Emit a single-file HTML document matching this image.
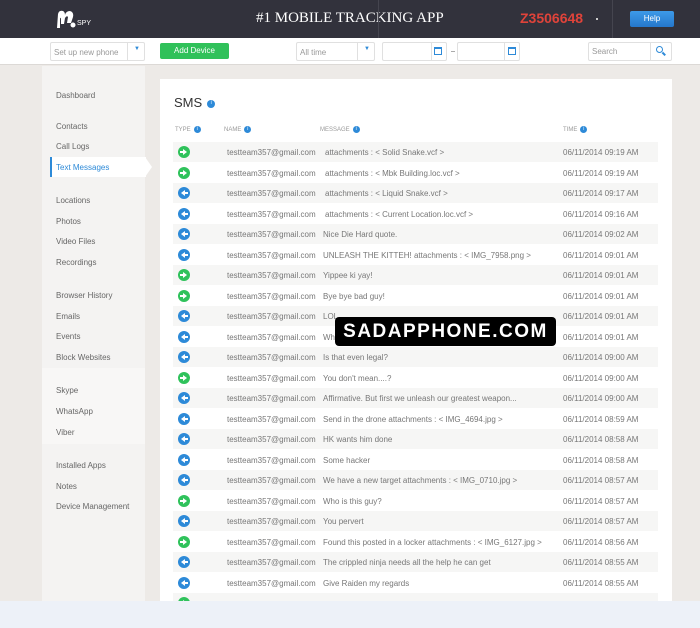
<!DOCTYPE html>
<html style="width:700px;height:628px;overflow:hidden"><head><meta charset="utf-8"><style>
*{margin:0;padding:0;box-sizing:border-box}
body{width:700px;height:628px;overflow:hidden;background:#edeae7;font-family:"Liberation Sans",Arial,sans-serif;position:relative}
.a{position:absolute}
#hdr{left:0;top:0;width:700px;height:38px;background:#32323c}
#tb{left:0;top:38px;width:700px;height:27px;background:#fff;border-bottom:1px solid #dcd9d6}
.inp{position:absolute;background:#fff;border:1px solid #e0e0e0;border-radius:2px;font-size:8px;color:#999;padding:5px 3px}
.side{left:42px;width:103px}
.si{position:absolute;left:56px;font-size:8px;color:#666}
#panel{left:160px;top:79px;width:512px;height:522px;background:#fff}
.row{position:absolute;left:173px;width:485px;height:20px;font-size:8px;color:#777}
.row.s{background:#f6f6f5}
.row span{position:absolute;top:6px;white-space:nowrap}
.ic{position:absolute;left:5px;top:4px;width:12px;height:12px;border-radius:50%}
.g{background:#2fc25b}.b{background:#2d8ad8}
.ic::after{content:"";position:absolute;top:3px;width:0;height:0;border-top:3px solid transparent;border-bottom:3px solid transparent}
.g::after{left:5px;border-left:4px solid #fff}
.b::after{left:3px;border-right:4px solid #fff}
.ic::before{content:"";position:absolute;top:5px;width:4px;height:2px;background:#fff}
.g::before{left:2px}.b::before{left:6px}
.hd{position:absolute;top:126px;font-size:6px;color:#999}
.info{display:inline-block;width:7px;height:7px;border-radius:50%;background:#2d8ad8;vertical-align:middle;margin-left:3px;color:#fff;font-size:5px;text-align:center;line-height:7px}
</style></head><body>
<div id="hdr" class="a">
 <svg class="a" style="left:55px;top:9px" width="22" height="20" viewBox="0 0 22 20"><path d="M2 19 L3 5 Q4 1 8 2 Q10 3 10 6 Q11 2 15 2 Q19 3 18 8 L16 14 L12 14 L13 8 Q12 6 10 9 L9 15 L6 15 L6 9 Q5 8 5 12 L5 19 Z" fill="#fff"/><circle cx="18" cy="16" r="2.5" fill="#fff"/></svg>
 <div class="a" style="left:77px;top:20px;font-size:7px;color:#fff">SPY</div>
 <div class="a" style="left:256px;top:10px;font-family:'Liberation Serif',serif;font-size:15px;color:#fff">#1 MOBILE TRACKING APP</div>
 <div class="a" style="left:378px;top:0;width:1px;height:38px;background:#45454f"></div>
 <div class="a" style="left:520px;top:10px;font-size:14px;color:#e0433a;font-weight:bold">Z3506648</div>
 <div class="a" style="left:596px;top:18px;width:2px;height:2px;background:#ccc"></div>
 <div class="a" style="left:612px;top:0;width:1px;height:38px;background:#45454f"></div>
 <div class="a" style="left:630px;top:11px;width:44px;height:16px;background:linear-gradient(#3d9ae8,#2577cc);border-radius:2px;color:#fff;font-size:8px;text-align:center;line-height:16px">Help</div>
</div>
<div id="tb" class="a">
 <div class="inp" style="left:50px;top:4px;width:95px;height:19px">Set up new phone<span style="position:absolute;left:76px;top:0;width:1px;height:17px;background:#e0e0e0"></span><span style="position:absolute;left:83px;top:3px;color:#2d8ad8;font-size:6px">▼</span></div>
 <div class="a" style="left:160px;top:5px;width:69px;height:16px;background:#30c15a;border-radius:2px;color:#fff;font-size:8px;text-align:center;line-height:16px">Add Device</div>
 <div class="inp" style="left:296px;top:4px;width:79px;height:19px">All time<span style="position:absolute;left:60px;top:0;width:1px;height:17px;background:#e0e0e0"></span><span style="position:absolute;left:67px;top:3px;color:#2d8ad8;font-size:6px">▼</span></div>
 <div class="inp" style="left:382px;top:4px;width:65px;height:19px"><span style="position:absolute;left:48px;top:0;width:1px;height:17px;background:#e0e0e0"></span><span style="position:absolute;left:51px;top:4px;width:8px;height:8px;border:1px solid #2d8ad8;border-top-width:2px"></span></div>
 <div class="a" style="left:451px;top:13px;width:4px;height:1px;background:#aaa"></div>
 <div class="inp" style="left:457px;top:4px;width:63px;height:19px"><span style="position:absolute;left:46px;top:0;width:1px;height:17px;background:#e0e0e0"></span><span style="position:absolute;left:50px;top:4px;width:8px;height:8px;border:1px solid #2d8ad8;border-top-width:2px"></span></div>
 <div class="inp" style="left:588px;top:4px;width:84px;height:19px;padding-top:4px">Search<span style="position:absolute;left:61px;top:0;width:1px;height:17px;background:#e0e0e0"></span><span style="position:absolute;left:67px;top:3px;width:7px;height:7px;border:1.5px solid #2d8ad8;border-radius:50%"></span><span style="position:absolute;left:73px;top:10px;width:4px;height:1.5px;background:#2d8ad8;transform:rotate(45deg)"></span></div>
</div>
<div class="a side" style="top:66px;height:114px;background:#f4f3f2"></div>
<div class="a side" style="top:180px;height:94px;background:#f4f3f2"></div>
<div class="a side" style="top:274px;height:94px;background:#f4f3f2"></div>
<div class="a side" style="top:368px;height:76px;background:#f8f7f6"></div>
<div class="a side" style="top:444px;height:157px;background:#f4f3f2"></div>
<div class="a" style="left:50px;top:157px;width:96px;height:20px;background:#fff;border-left:2px solid #2d8ad8"></div>
<div class="a" style="left:145px;top:157px;width:0;height:0;border-top:10px solid transparent;border-bottom:10px solid transparent;border-left:7px solid #fff"></div>
<div class="si" style="top:91px">Dashboard</div>
<div class="si" style="top:122px">Contacts</div>
<div class="si" style="top:142px">Call Logs</div>
<div class="si" style="top:163px;color:#2d8ad8">Text Messages</div>
<div class="si" style="top:196px">Locations</div>
<div class="si" style="top:217px">Photos</div>
<div class="si" style="top:237px">Video Files</div>
<div class="si" style="top:258px">Recordings</div>
<div class="si" style="top:291px">Browser History</div>
<div class="si" style="top:312px">Emails</div>
<div class="si" style="top:332px">Events</div>
<div class="si" style="top:353px">Block Websites</div>
<div class="si" style="top:386px">Skype</div>
<div class="si" style="top:407px">WhatsApp</div>
<div class="si" style="top:428px">Viber</div>
<div class="si" style="top:461px">Installed Apps</div>
<div class="si" style="top:482px">Notes</div>
<div class="si" style="top:502px">Device Management</div>
<div id="panel" class="a"></div>
<div class="a" style="left:174px;top:95px;font-size:13px;color:#333">SMS<span class="info" style="width:8px;height:8px;margin-left:5px">i</span></div>
<div class="hd" style="left:175px">TYPE<span class="info">i</span></div>
<div class="hd" style="left:224px">NAME<span class="info">i</span></div>
<div class="hd" style="left:320px">MESSAGE<span class="info">i</span></div>
<div class="hd" style="left:563px">TIME<span class="info">i</span></div>

<div class="row s" style="top:142px"><i class="ic g"></i><span style="left:54px">testteam357@gmail.com</span><span style="left:152px">attachments : &lt; Solid Snake.vcf &gt;</span><span style="left:390px">06/11/2014 09:19 AM</span></div>
<div class="row" style="top:162.5px"><i class="ic g"></i><span style="left:54px">testteam357@gmail.com</span><span style="left:152px">attachments : &lt; Mbk Building.loc.vcf &gt;</span><span style="left:390px">06/11/2014 09:19 AM</span></div>
<div class="row s" style="top:183px"><i class="ic b"></i><span style="left:54px">testteam357@gmail.com</span><span style="left:152px">attachments : &lt; Liquid Snake.vcf &gt;</span><span style="left:390px">06/11/2014 09:17 AM</span></div>
<div class="row" style="top:203.5px"><i class="ic b"></i><span style="left:54px">testteam357@gmail.com</span><span style="left:152px">attachments : &lt; Current Location.loc.vcf &gt;</span><span style="left:390px">06/11/2014 09:16 AM</span></div>
<div class="row s" style="top:224px"><i class="ic b"></i><span style="left:54px">testteam357@gmail.com</span><span style="left:150px">Nice Die Hard quote.</span><span style="left:390px">06/11/2014 09:02 AM</span></div>
<div class="row" style="top:244.5px"><i class="ic b"></i><span style="left:54px">testteam357@gmail.com</span><span style="left:150px">UNLEASH THE KITTEH! attachments : &lt; IMG_7958.png &gt;</span><span style="left:390px">06/11/2014 09:01 AM</span></div>
<div class="row s" style="top:265px"><i class="ic g"></i><span style="left:54px">testteam357@gmail.com</span><span style="left:150px">Yippee ki yay!</span><span style="left:390px">06/11/2014 09:01 AM</span></div>
<div class="row" style="top:285.5px"><i class="ic g"></i><span style="left:54px">testteam357@gmail.com</span><span style="left:150px">Bye bye bad guy!</span><span style="left:390px">06/11/2014 09:01 AM</span></div>
<div class="row s" style="top:306px"><i class="ic b"></i><span style="left:54px">testteam357@gmail.com</span><span style="left:150px">LOL</span><span style="left:390px">06/11/2014 09:01 AM</span></div>
<div class="row" style="top:326.5px"><i class="ic b"></i><span style="left:54px">testteam357@gmail.com</span><span style="left:150px">What</span><span style="left:390px">06/11/2014 09:01 AM</span></div>
<div class="row s" style="top:347px"><i class="ic b"></i><span style="left:54px">testteam357@gmail.com</span><span style="left:150px">Is that even legal?</span><span style="left:390px">06/11/2014 09:00 AM</span></div>
<div class="row" style="top:367.5px"><i class="ic g"></i><span style="left:54px">testteam357@gmail.com</span><span style="left:150px">You don't mean....?</span><span style="left:390px">06/11/2014 09:00 AM</span></div>
<div class="row s" style="top:388px"><i class="ic b"></i><span style="left:54px">testteam357@gmail.com</span><span style="left:150px">Affirmative. But first we unleash our greatest weapon...</span><span style="left:390px">06/11/2014 09:00 AM</span></div>
<div class="row" style="top:408.5px"><i class="ic b"></i><span style="left:54px">testteam357@gmail.com</span><span style="left:150px">Send in the drone attachments : &lt; IMG_4694.jpg &gt;</span><span style="left:390px">06/11/2014 08:59 AM</span></div>
<div class="row s" style="top:429px"><i class="ic b"></i><span style="left:54px">testteam357@gmail.com</span><span style="left:150px">HK wants him done</span><span style="left:390px">06/11/2014 08:58 AM</span></div>
<div class="row" style="top:449.5px"><i class="ic b"></i><span style="left:54px">testteam357@gmail.com</span><span style="left:150px">Some hacker</span><span style="left:390px">06/11/2014 08:58 AM</span></div>
<div class="row s" style="top:470px"><i class="ic b"></i><span style="left:54px">testteam357@gmail.com</span><span style="left:150px">We have a new target attachments : &lt; IMG_0710.jpg &gt;</span><span style="left:390px">06/11/2014 08:57 AM</span></div>
<div class="row" style="top:490.5px"><i class="ic g"></i><span style="left:54px">testteam357@gmail.com</span><span style="left:150px">Who is this guy?</span><span style="left:390px">06/11/2014 08:57 AM</span></div>
<div class="row s" style="top:511px"><i class="ic b"></i><span style="left:54px">testteam357@gmail.com</span><span style="left:150px">You pervert</span><span style="left:390px">06/11/2014 08:57 AM</span></div>
<div class="row" style="top:531.5px"><i class="ic g"></i><span style="left:54px">testteam357@gmail.com</span><span style="left:150px">Found this posted in a locker attachments : &lt; IMG_6127.jpg &gt;</span><span style="left:390px">06/11/2014 08:56 AM</span></div>
<div class="row s" style="top:552px"><i class="ic b"></i><span style="left:54px">testteam357@gmail.com</span><span style="left:150px">The crippled ninja needs all the help he can get</span><span style="left:390px">06/11/2014 08:55 AM</span></div>
<div class="row" style="top:572.5px"><i class="ic b"></i><span style="left:54px">testteam357@gmail.com</span><span style="left:150px">Give Raiden my regards</span><span style="left:390px">06/11/2014 08:55 AM</span></div>
<div class="row s" style="top:593px;height:8px;overflow:hidden"><i class="ic g"></i></div>

<div class="a" style="left:335px;top:317px;width:221px;height:29px;background:#000;border-radius:4px;color:#fff;font-size:19px;font-weight:bold;letter-spacing:1.5px;text-align:center;line-height:29px">SADAPPHONE.COM</div>
<div class="a" style="left:0;top:601px;width:700px;height:27px;background:#edf1f8"></div>
</body></html>
